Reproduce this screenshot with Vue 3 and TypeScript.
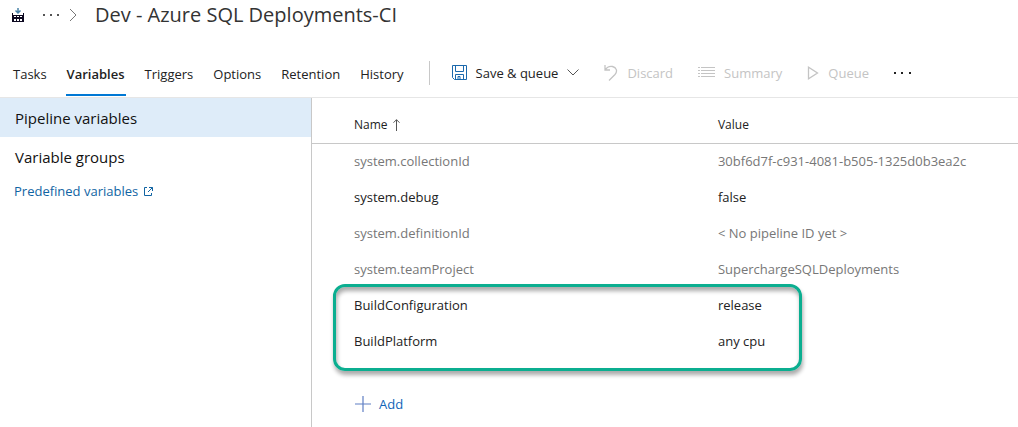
<script setup lang="ts">
import { ref } from 'vue'

interface Variable {
  name: string
  value: string
  system: boolean
}

const tabs: string[] = ['Tasks', 'Variables', 'Triggers', 'Options', 'Retention', 'History']
const activeTab = ref<string>('Variables')

const sections: string[] = ['Pipeline variables', 'Variable groups']
const activeSection = ref<string>('Pipeline variables')

const variables: Variable[] = [
  { name: 'system.collectionId', value: '30bf6d7f-c931-4081-b505-1325d0b3ea2c', system: true },
  { name: 'system.debug', value: 'false', system: false },
  { name: 'system.definitionId', value: '< No pipeline ID yet >', system: true },
  { name: 'system.teamProject', value: 'SuperchargeSQLDeployments', system: true },
  { name: 'BuildConfiguration', value: 'release', system: false },
  { name: 'BuildPlatform', value: 'any cpu', system: false },
]
</script>

<template>
  <div class="page">
    <header class="titlebar">
      <svg class="build-icon" width="14" height="15" viewBox="0 0 14 15" aria-hidden="true">
        <path d="M7 0v5M4.5 2.500 7 5l2.500-2.500" fill="none" stroke="#4a83a8" stroke-width="1.500" />
        <path d="M1 5h1v2h10V5h1v9H1z" fill="#0c0820" />
        <path d="M3 8h2v1H3zM6 8h2v1H6zM9 8h2v1H9zM3 11h2v2H3zM6 11h2v2H6zM9 11h2v2H9z" fill="#fff" />
      </svg>
      <button class="plain crumb-more" type="button" aria-label="More breadcrumbs">
        <svg width="16" height="4" viewBox="0 0 16 4"><path d="M0 1h2v2H0zM7 1h2v2H7zM14 1h2v2h-2z" fill="#555" /></svg>
      </button>
      <svg class="crumb-arrow" width="8" height="14" viewBox="0 0 8 14" aria-hidden="true">
        <path d="M1 1l6 6-6 6" fill="none" stroke="#777" />
      </svg>
      <h1>Dev - Azure SQL Deployments-CI</h1>
    </header>

    <div class="toolbar">
      <nav class="tabs">
        <button
          v-for="tab in tabs"
          :key="tab"
          type="button"
          class="plain tab"
          :class="{ active: tab === activeTab }"
          @click="activeTab = tab"
        >{{ tab }}</button>
      </nav>
      <div class="commands">
        <button class="plain command save" type="button">
          <svg width="15" height="15" viewBox="0 0 15 15" aria-hidden="true">
            <path d="M.5.5h14v14h-12l-2-2zM3.500.5v6h8v-6M3.500 14.500v-5h8v5M6 14.500v-3h2v3" fill="none" stroke="#1b69ad" />
          </svg>
          <span>Save &amp; queue</span>
          <svg width="12" height="7" viewBox="0 0 12 7" aria-hidden="true"><path d="M.5.5 6 6 11.500.5" fill="none" stroke="#555" /></svg>
        </button>
        <button class="plain command discard" type="button" disabled>
          <svg width="14" height="16" viewBox="0 0 14 16" aria-hidden="true">
            <path d="M1 0v5h5M1 5C3 2 6 1 8.500 1.500c4 .8 5.300 5 2.500 8L5 15.500" fill="none" stroke="#c4c4c4" stroke-width="1.300" />
          </svg>
          <span>Discard</span>
        </button>
        <button class="plain command summary" type="button" disabled>
          <svg width="17" height="11" viewBox="0 0 17 11" aria-hidden="true">
            <path d="M0 .5h2M3 .5h14M0 3.500h2M3 3.500h14M0 6.500h2M3 6.500h14M0 9.500h2M3 9.500h14" stroke="#c4c4c4" />
          </svg>
          <span>Summary</span>
        </button>
        <button class="plain command queue" type="button" disabled>
          <svg width="12" height="14" viewBox="0 0 12 14" aria-hidden="true">
            <path d="M1.500 1.200v11.600L10.500 7z" fill="none" stroke="#c4c4c4" stroke-width="1.300" />
          </svg>
          <span>Queue</span>
        </button>
        <button class="plain command" type="button" aria-label="More actions">
          <svg width="18" height="4" viewBox="0 0 18 4"><path d="M0 1h2v2H0zM7 1h2v2H7zM15 1h2v2h-2z" fill="#222" /></svg>
        </button>
      </div>
    </div>

    <div class="body">
      <aside class="sidebar">
        <button
          v-for="section in sections"
          :key="section"
          type="button"
          class="plain section"
          :class="{ selected: section === activeSection }"
          @click="activeSection = section"
        >{{ section }}</button>
        <a class="predefined" href="#predefined">
          Predefined variables
          <svg width="9" height="9" viewBox="0 0 9 9" aria-hidden="true">
            <path d="M3 .5H.5v8h7V6M5 .5h3.500V4M8.500.5 4 5" fill="none" stroke="#1064a3" />
          </svg>
        </a>
      </aside>

      <main class="content">
        <div class="table-wrap">
          <table>
            <thead>
              <tr>
                <th class="name" scope="col">
                  Name
                  <svg class="sort" width="7" height="12" viewBox="0 0 7 12" aria-hidden="true">
                    <path d="M3.500 12V.7M.5 3.700l3-3 3 3" fill="none" stroke="#555" />
                  </svg>
                </th>
                <th scope="col">Value</th>
              </tr>
            </thead>
            <tbody>
              <tr v-for="v in variables" :key="v.name" :class="{ system: v.system }">
                <td class="name">{{ v.name }}</td>
                <td>{{ v.value }}</td>
              </tr>
            </tbody>
          </table>
          <div class="highlight"></div>
        </div>
        <button class="plain add" type="button">
          <svg width="16" height="16" viewBox="0 0 16 16" aria-hidden="true"><path d="M8 0v16M0 8h16" stroke="#5f7fc4" stroke-width="1.200" /></svg>
          <span>Add</span>
        </button>
      </main>
    </div>
  </div>
</template>

<style>
body {
  background: #fff;
}
</style>

<style scoped>
.page {
  display: flex;
  flex-direction: column;
  min-height: 100vh;
  font-family: "Segoe UI", "Open Sans", "Noto Sans", sans-serif;
  font-size: 13px;
  line-height: 20px;
  color: #222;
}
.plain {
  border: 0;
  padding: 0;
  background: none;
  font: inherit;
  color: inherit;
  white-space: nowrap;
  cursor: pointer;
}
.plain svg {
  display: block;
}
.titlebar {
  display: flex;
  align-items: center;
  height: 30px;
  padding-left: 11px;
}
.crumb-more {
  margin-left: 18px;
}
.crumb-arrow {
  margin-left: 10px;
}
h1 {
  margin: 0 0 0 18px;
  font-size: 20px;
  font-weight: 400;
  line-height: 30px;
  color: #333;
}
.toolbar {
  display: flex;
  align-items: center;
  height: 67px;
  padding-left: 12px;
  border-bottom: 1px solid #e6e6e6;
}
.tabs {
  display: flex;
  align-self: stretch;
  align-items: flex-end;
  gap: 18px;
  padding-bottom: 1px;
}
.tab {
  padding: 0 1px 10px;
  border-bottom: 2px solid transparent;
}
.tab.active {
  border-bottom-color: #0078d4;
  font-weight: 600;
}
.commands {
  display: flex;
  align-items: center;
  height: 24px;
  margin: 18px 0 0 24px;
  padding-left: 22px;
  gap: 25px;
  border-left: 1px solid #c8c8c8;
}
.command {
  display: flex;
  align-items: center;
  gap: 9px;
}
.command:disabled {
  color: #c4c4c4;
  cursor: default;
}
.body {
  display: flex;
  flex: 1;
}
.sidebar {
  flex: 0 0 311px;
  border-right: 1px solid #c8c8c8;
}
.section {
  display: block;
  width: 100%;
  height: 39px;
  padding-left: 15px;
  font-size: 15px;
  text-align: left;
  color: #111;
}
.section.selected {
  background: #deecf9;
}
.predefined {
  display: flex;
  align-items: center;
  gap: 6px;
  margin-top: 5px;
  padding-left: 14px;
  color: #1064a3;
  text-decoration: none;
}
.content {
  flex: 1;
  min-width: 0;
}
.table-wrap {
  position: relative;
}
table {
  width: 100%;
  border-collapse: separate;
  border-spacing: 0;
  table-layout: fixed;
}
th,
td {
  box-sizing: border-box;
  padding: 0;
  text-align: left;
  font-weight: 400;
  white-space: nowrap;
}
th {
  height: 46px;
  padding-top: 8px;
  border-bottom: 1px solid #c8c8c8;
  font-size: 12px;
}
td {
  height: 36px;
  padding-bottom: 2px;
}
.name {
  width: 57.500%;
  padding-left: 42px;
}
.sort {
  margin-left: 2px;
  vertical-align: -2px;
}
.system {
  color: #777;
}
.highlight {
  position: absolute;
  left: 21px;
  bottom: -11px;
  box-sizing: border-box;
  width: 469px;
  height: 87px;
  border: 3px solid #0bae90;
  border-radius: 12px;
  box-shadow: 1px 4px 4px #0005, inset 1px 4px 4px #0005;
  pointer-events: none;
}
.add {
  display: flex;
  align-items: center;
  gap: 8px;
  margin: 34px 0 0 43px;
  color: #1064b8;
}
</style>
